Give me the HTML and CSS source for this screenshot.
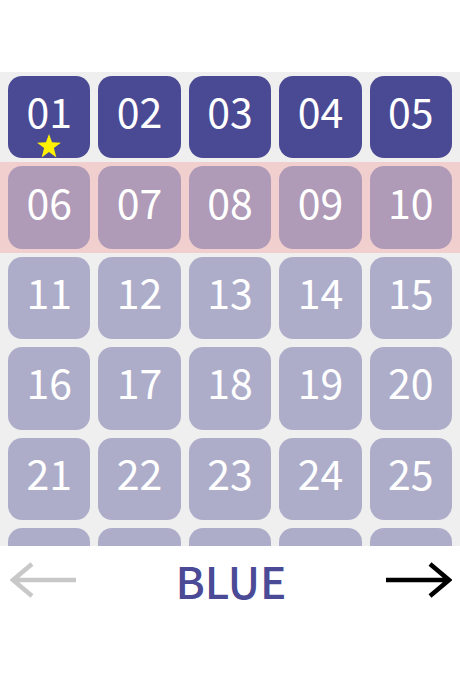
FILE: index.html
```html
<!DOCTYPE html>
<html lang="en">
<head>
    <meta charset="UTF-8">
    <meta name="viewport" content="width=device-width, initial-scale=1.0">
    <title>Levels</title>
    <link rel="stylesheet" href="styles.css">
</head>
<body>
    <div class="top"></div>

    <div class="levels">
        <div class="row">
            <div class="tile done">01
                <svg class="star" width="26" height="26" viewBox="0 0 24 24"><path d="M12 1 L14.8 8.6 L23 8.9 L16.5 13.9 L18.8 22.5 L12 17.6 L5.2 22.5 L7.5 13.9 L1 8.9 L9.2 8.6 Z" fill="#fff200"/></svg>
            </div>
            <div class="tile done">02</div>
            <div class="tile done">03</div>
            <div class="tile done">04</div>
            <div class="tile done">05</div>
        </div>
        <div class="row current">
            <div class="tile">06</div>
            <div class="tile">07</div>
            <div class="tile">08</div>
            <div class="tile">09</div>
            <div class="tile">10</div>
        </div>
        <div class="row">
            <div class="tile">11</div>
            <div class="tile">12</div>
            <div class="tile">13</div>
            <div class="tile">14</div>
            <div class="tile">15</div>
        </div>
        <div class="row">
            <div class="tile">16</div>
            <div class="tile">17</div>
            <div class="tile">18</div>
            <div class="tile">19</div>
            <div class="tile">20</div>
        </div>
        <div class="row">
            <div class="tile">21</div>
            <div class="tile">22</div>
            <div class="tile">23</div>
            <div class="tile">24</div>
            <div class="tile">25</div>
        </div>
        <div class="row">
            <div class="tile">26</div>
            <div class="tile">27</div>
            <div class="tile">28</div>
            <div class="tile">29</div>
            <div class="tile">30</div>
        </div>
    </div>

    <div class="nav">
        <svg class="arrow prev" width="68" height="36" viewBox="0 0 68 36"><path d="M66 18 H3 M22 2 L3 18 L22 34" fill="none" stroke="currentColor" stroke-width="4.5"/></svg>
        <h1 class="color-name">BLUE</h1>
        <svg class="arrow next" width="68" height="36" viewBox="0 0 68 36"><path d="M2 18 H65 M46 2 L65 18 L46 34" fill="none" stroke="currentColor" stroke-width="4.5"/></svg>
    </div>
</body>
</html>
```

FILE: styles.css
```css
body{
    margin: 0;
    background-color: white;
    font-family: "Noto Sans CJK JP", "Noto Sans", sans-serif;
}
.top{
    height: 72px;
}
.levels{
    height: 474px;
    overflow: hidden;
    background-color: #efefef;
}
.row{
    display: flex;
    gap: 8px;
    padding: 4px 8px;
}
.row.current{
    background-color: #f2cfcf;
}
.tile{
    position: relative;
    flex: 1;
    aspect-ratio: 1;
    border-radius: 14px;
    background-color: rgba(74, 74, 148, 0.4);
    color: white;
    font-size: 41px;
    display: flex;
    align-items: center;
    justify-content: center;
    padding-bottom: 14px;
    box-sizing: border-box;
}
.tile.done{
    background-color: #4a4a94;
}
.star{
    position: absolute;
    left: 50%;
    bottom: -1px;
    margin-left: -13px;
}
.nav{
    height: 68px;
    display: flex;
    align-items: center;
    justify-content: space-between;
    padding: 0 8px 0 10px;
}
.color-name{
    margin: 0;
    font-size: 44px;
    font-weight: 500;
    color: #4b4a96;
}
.arrow.prev{
    color: #c8c8c8;
}
.arrow.next{
    color: black;
}
```
